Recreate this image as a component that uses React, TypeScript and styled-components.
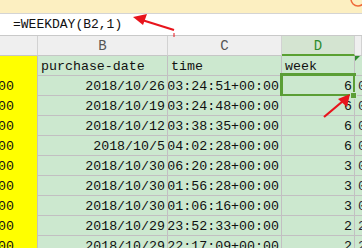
import React from 'react';
import styled, { createGlobalStyle } from 'styled-components';

const GlobalStyle = createGlobalStyle`
  body {
    margin: 0;
    padding: 0;
    background: #ffffff;
    overflow: hidden;
    font-family: 'Liberation Mono', 'DejaVu Sans Mono', monospace;
  }
`;

const Page = styled.div`
  position: relative;
  width: 362px;
  height: 248px;
  overflow: hidden;
`;

const TopBand = styled.div`
  height: 13px;
  background: #fcefc1;
`;

const FormulaBar = styled.div`
  height: 21px;
  border-top: 1px solid #d4d4d4;
  border-bottom: 1px solid #c9c9c9;
  background: #ffffff;
  padding-left: 13px;
  display: flex;
  align-items: center;
  font-size: 13px;
  color: #111;
`;

const Sheet = styled.div`
  display: grid;
  grid-template-columns: 38px 130px 114px 73px 1fr;
  grid-auto-rows: 20px;
`;

const HeaderCell = styled.div<{ $active?: boolean }>`
  box-sizing: border-box;
  background: ${(p) => (p.$active ? '#d4e4d1' : '#efefef')};
  color: ${(p) => (p.$active ? '#2e8b2e' : '#555')};
  border-right: 1px solid #d2d2d2;
  border-bottom: ${(p) => (p.$active ? '2px solid #5aa032' : '1px solid #c6c6c6')};
  display: flex;
  align-items: center;
  justify-content: center;
  font-size: 14px;
  padding-top: 1px;
`;

const Cell = styled.div<{ $align?: 'left' | 'right'; $yellow?: boolean; $selected?: boolean; $grid?: boolean }>`
  position: relative;
  box-sizing: border-box;
  background: ${(p) => (p.$yellow ? '#ffff00' : '#cce8cf')};
  border-right: ${(p) => (p.$grid === false ? 'none' : '1px solid #c2bfc2')};
  border-bottom: ${(p) => (p.$yellow ? 'none' : '1px solid #c2bfc2')};
  display: flex;
  align-items: center;
  justify-content: ${(p) => (p.$align === 'right' ? 'flex-end' : 'flex-start')};
  padding: 1px ${(p) => (p.$align === 'right' ? '2px' : '0')} 0 ${(p) => (p.$align === 'right' ? '0' : '3px')};
  font-size: 13.3px;
  color: #111;
  white-space: nowrap;
  overflow: ${(p) => (p.$selected ? 'visible' : 'hidden')};

  ${(p) =>
    p.$selected &&
    `
    &::after {
      content: '';
      position: absolute;
      left: -2px;
      top: -3px;
      right: -2px;
      bottom: -2px;
      border: 3px solid #5b9e36;
      pointer-events: none;
    }
    &::before {
      content: '';
      position: absolute;
      right: -3px;
      bottom: -4px;
      width: 5px;
      height: 5px;
      background: #5b9e36;
      border: 1px solid #cce8cf;
      z-index: 2;
    }
  `}
`;

const ClipText = styled.span`
  margin-left: -5px;
`;

const EdgeText = styled.span`
  color: #2a2a3a;
`;

const ErrorMark = styled.span`
  position: absolute;
  left: 0;
  top: 0;
  width: 0;
  height: 0;
  border-top: 5px solid #2e8b2e;
  border-right: 5px solid transparent;
`;

const Overlay = styled.svg`
  position: absolute;
  left: 0;
  top: 0;
  pointer-events: none;
`;

const rows: [string, string, string, string][] = [
  ['2018/10/26', '03:24:51+00:00', '6', '0'],
  ['2018/10/19', '03:24:48+00:00', '6', '0'],
  ['2018/10/12', '03:38:35+00:00', '6', '0'],
  ['2018/10/5', '04:02:28+00:00', '6', '0'],
  ['2018/10/30', '06:20:28+00:00', '3', '0'],
  ['2018/10/30', '01:56:28+00:00', '3', '0'],
  ['2018/10/30', '01:06:16+00:00', '3', '0'],
  ['2018/10/29', '23:52:33+00:00', '2', '2'],
  ['2018/10/29', '22:17:09+00:00', '2', '2'],
];

const App: React.FC = () => {
  return (
    <>
      <GlobalStyle />
      <Page>
        <TopBand />
        <FormulaBar>=WEEKDAY(B2,1)</FormulaBar>
        <Sheet>
          <HeaderCell />
          <HeaderCell>B</HeaderCell>
          <HeaderCell>C</HeaderCell>
          <HeaderCell $active>D</HeaderCell>
          <HeaderCell />

          <Cell $yellow />
          <Cell>purchase-date</Cell>
          <Cell>time</Cell>
          <Cell>week</Cell>
          <Cell $grid={false}>
            <ErrorMark />
          </Cell>

          {rows.map(([date, time, week, e], i) => (
            <React.Fragment key={i}>
              <Cell $yellow>
                <ClipText>00</ClipText>
              </Cell>
              <Cell $align="right">{date}</Cell>
              <Cell $align="right">{time}</Cell>
              <Cell $align="right" $selected={i === 0}>
                {week}
              </Cell>
              <Cell $grid={false}>
                <EdgeText>{e}</EdgeText>
              </Cell>
            </React.Fragment>
          ))}
        </Sheet>

        <Overlay width="362" height="248" viewBox="0 0 362 248">
          {/* badge circle at top right */}
          <circle cx="358" cy="-1" r="7" fill="none" stroke="#ef6a3a" strokeWidth="1.5" />
          {/* arrow to formula */}
          <line x1="174" y1="30" x2="142" y2="20" stroke="#e8141c" strokeWidth="2.2" />
          <polygon points="133,17 147,14 143,25" fill="#e8141c" />
          <line x1="174" y1="33" x2="174" y2="37" stroke="#e8141c" strokeWidth="1" />
          {/* arrow to selected cell */}
          <line x1="324" y1="117" x2="343" y2="101" stroke="#e8141c" strokeWidth="2.2" />
          <polygon points="350,94 347,107 338,99" fill="#e8141c" />
        </Overlay>
      </Page>
    </>
  );
};

export default App;
